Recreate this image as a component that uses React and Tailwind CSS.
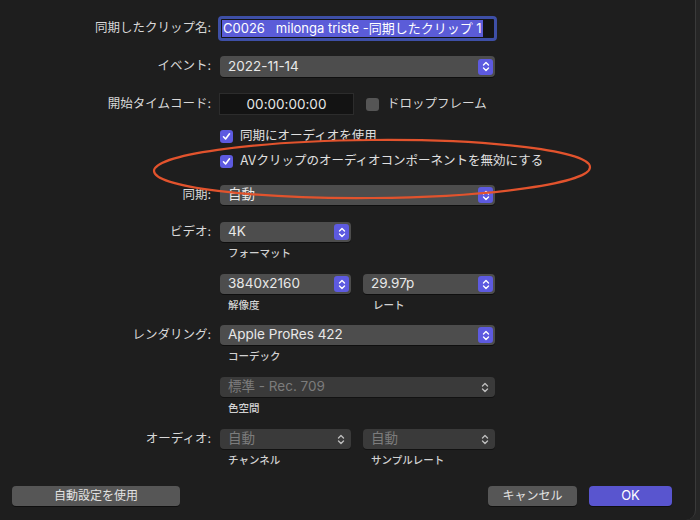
import React from "react";

const font = { fontFamily: 'Inter, "Noto Sans CJK JP", sans-serif' };

function Chevrons({ className = "" }) {
    return (
        <svg width="8" height="11" viewBox="0 0 8 11" fill="none" className={className}>
            <path d="M1.5 4 L4 1.5 L6.5 4" stroke="currentColor" strokeWidth="1.4" strokeLinecap="round" strokeLinejoin="round" />
            <path d="M1.5 7 L4 9.5 L6.5 7" stroke="currentColor" strokeWidth="1.4" strokeLinecap="round" strokeLinejoin="round" />
        </svg>
    );
}

function Popup({ value, width, disabled }) {
    return (
        <div className={`h-[20px] rounded-[4px] flex items-center justify-between pl-2 pr-[2px] ${width} ${disabled ? "bg-[#3a3a3a] shadow-[0_1px_0_rgba(0,0,0,0.4)]" : "bg-[#4d4d4d] shadow-[0_1px_0_rgba(0,0,0,0.5)]"}`}>
            <span className={`text-[13.5px] leading-none ${disabled ? "text-[#7c7c7c]" : "text-[#e8e8e8]"}`}>{value}</span>
            {disabled ? (
                <Chevrons className="text-[#bdbdbd] mr-[4px]" />
            ) : (
                <div className="w-[15px] h-[16px] rounded-[3px] bg-[#5d5ae0] flex items-center justify-center">
                    <Chevrons className="text-white" />
                </div>
            )}
        </div>
    );
}

function Label({ children }) {
    return <div className="w-[212px] shrink-0 text-right text-[12.5px] text-[#d8d8d8] pr-[1px]">{children}</div>;
}

function Caption({ children, className = "" }) {
    return <div className={`h-[16px] mt-[4px] pl-2 text-[10.5px] font-medium leading-[16px] text-[#d2d2d2] ${className}`}>{children}</div>;
}

function Check({ checked }) {
    return checked ? (
        <div className="w-[13px] h-[13px] rounded-[3px] bg-[#5d5ae0] flex items-center justify-center">
            <svg width="9" height="9" viewBox="0 0 9 9" fill="none">
                <path d="M1.5 4.8 L3.6 7 L7.5 1.8" stroke="white" strokeWidth="1.6" strokeLinecap="round" strokeLinejoin="round" />
            </svg>
        </div>
    ) : (
        <div className="w-[13px] h-[13px] rounded-[3px] bg-[#555555]" />
    );
}

export default function App() {
    return (
        <div className="w-[700px] h-[520px] bg-[#262626] overflow-hidden [font-feature-settings:'calt'_0]" style={font}>
            <div className="relative w-[696px] h-[520px] bg-[#1e1e1e] border-r border-[#3a3a3a] rounded-br-[10px] pt-[16px]">
                {/* clip name */}
                <div className="flex items-center h-[25px]">
                    <Label>同期したクリップ名:</Label>
                    <div className="ml-[6px] w-[279px] h-[25px] rounded-[4px] border-[3px] border-[#3e4fa6] bg-[#151515] flex items-center pl-[1px]">
                        <span className="text-[13px] leading-[17px] text-white bg-[#5b5cd8] whitespace-pre px-[1px]">C0026   milonga triste -同期したクリップ 1</span>
                    </div>
                </div>

                {/* event */}
                <div className="flex items-center mt-[15px]">
                    <Label>イベント:</Label>
                    <div className="ml-[8px]"><Popup value="2022-11-14" width="w-[275px] h-[21px]" /></div>
                </div>

                {/* timecode */}
                <div className="flex items-center mt-[16px]">
                    <Label>開始タイムコード:</Label>
                    <div className="ml-[7px] w-[135px] h-[22px] bg-[#131313] border border-[#2c2c2c] flex items-center justify-center text-[13.5px] text-[#e6e6e6]">00:00:00:00</div>
                    <div className="ml-[12px] flex items-center gap-[8px]">
                        <Check />
                        <span className="text-[12.5px] text-[#d8d8d8]">ドロップフレーム</span>
                    </div>
                </div>

                {/* checkboxes */}
                <div className="flex items-center mt-[13px] h-[16px]">
                    <div className="w-[220px]" />
                    <Check checked />
                    <span className="ml-[7px] text-[12.5px] text-[#e0e0e0]">同期にオーディオを使用</span>
                </div>
                <div className="flex items-center mt-[9px] h-[16px]">
                    <div className="w-[220px]" />
                    <Check checked />
                    <span className="ml-[7px] text-[12.5px] text-[#e0e0e0]">AVクリップのオーディオコンポーネントを無効にする</span>
                </div>

                {/* sync */}
                <div className="flex items-center mt-[16px]">
                    <Label>同期:</Label>
                    <div className="ml-[8px]"><Popup value="自動" width="w-[275px]" /></div>
                </div>

                {/* video */}
                <div className="flex items-center mt-[17px]">
                    <Label>ビデオ:</Label>
                    <div className="ml-[8px]"><Popup value="4K" width="w-[131px]" /></div>
                </div>
                <div className="flex">
                    <div className="w-[220px]" />
                    <Caption>フォーマット</Caption>
                </div>

                <div className="flex mt-[12px]">
                    <div className="w-[220px]" />
                    <div className="flex gap-[12px]">
                        <div>
                            <Popup value="3840x2160" width="w-[131px]" />
                            <Caption>解像度</Caption>
                        </div>
                        <div>
                            <Popup value="29.97p" width="w-[132px]" />
                            <Caption className="pl-[10px]">レート</Caption>
                        </div>
                    </div>
                </div>

                {/* rendering */}
                <div className="flex items-center mt-[11px]">
                    <Label>レンダリング:</Label>
                    <div className="ml-[8px]"><Popup value="Apple ProRes 422" width="w-[275px]" /></div>
                </div>
                <div className="flex">
                    <div className="w-[220px]" />
                    <Caption>コーデック</Caption>
                </div>

                <div className="flex mt-[12px]">
                    <div className="w-[220px]" />
                    <div>
                        <Popup value="標準 - Rec. 709" width="w-[275px]" disabled />
                        <Caption>色空間</Caption>
                    </div>
                </div>

                {/* audio */}
                <div className="flex items-center mt-[12px]">
                    <Label>オーディオ:</Label>
                    <div className="ml-[8px] flex gap-[12px]">
                        <Popup value="自動" width="w-[131px]" disabled />
                        <Popup value="自動" width="w-[132px]" disabled />
                    </div>
                </div>
                <div className="flex">
                    <div className="w-[220px]" />
                    <Caption className="w-[143px]">チャンネル</Caption>
                    <Caption>サンプルレート</Caption>
                </div>

                {/* buttons */}
                <div className="flex items-center mt-[17px] px-[12px]">
                    <button className="w-[168px] h-[20px] rounded-[4px] bg-[#565656] text-[12px] text-[#e2e2e2] shadow-[0_1px_0_rgba(0,0,0,0.5)]">自動設定を使用</button>
                    <div className="flex-1" />
                    <button className="w-[89px] h-[20px] rounded-[4px] bg-[#565656] text-[12px] text-[#e2e2e2] shadow-[0_1px_0_rgba(0,0,0,0.5)]">キャンセル</button>
                    <button className="ml-[12px] w-[83px] h-[20px] rounded-[4px] bg-[#5955cf] text-[13px] text-white shadow-[0_1px_0_rgba(0,0,0,0.5)]">OK</button>
                    <div className="w-[11px]" />
                </div>

                {/* annotation */}
                <svg className="absolute left-0 top-0 pointer-events-none" width="696" height="520">
                    <ellipse cx="372" cy="169" rx="218" ry="29" fill="none" stroke="#e2532d" strokeWidth="2.2" transform="rotate(-0.5 372 169)" />
                </svg>
            </div>
        </div>
    );
}
